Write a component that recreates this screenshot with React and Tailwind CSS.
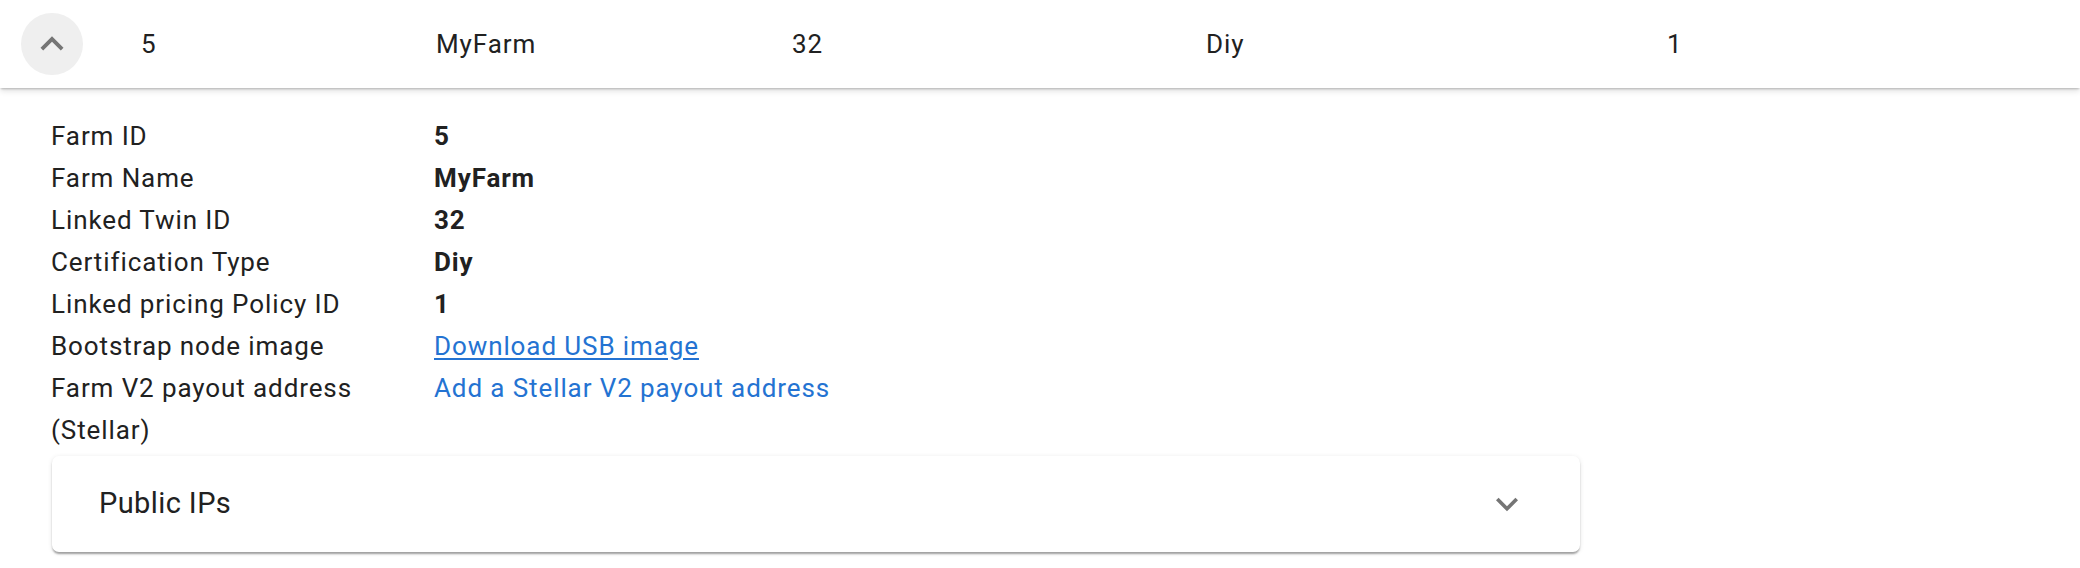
import React from 'react';

const ChevronUp = ({ className = '' }) => (
  <svg viewBox="0 0 24 24" className={className} fill="currentColor">
    <path d="M7.41 15.41 12 10.83l4.59 4.58L18 14l-6-6-6 6z" />
  </svg>
);

const ChevronDown = ({ className = '' }) => (
  <svg viewBox="0 0 24 24" className={className} fill="currentColor">
    <path d="M16.59 8.59 12 13.17 7.41 8.59 6 10l6 6 6-6z" />
  </svg>
);

const details = [
  { label: 'Farm ID', value: '5' },
  { label: 'Farm Name', value: 'MyFarm' },
  { label: 'Linked Twin ID', value: '32' },
  { label: 'Certification Type', value: 'Diy' },
  { label: 'Linked pricing Policy ID', value: '1' },
  { label: 'Bootstrap node image', value: 'Download USB image', link: true, underline: true },
  { label: 'Farm V2 payout address (Stellar)', value: 'Add a Stellar V2 payout address', link: true },
];

const FarmRow = () => {
  return (
    <div
      className="
        relative z-10 h-[88px] bg-white
        grid grid-cols-[141px_295px_356px_414px_461px_1fr] items-center
        text-[26px] tracking-[0.9px] text-[#212121]
        shadow-[0_2px_2px_-1px_rgba(0,0,0,0.22),0_3px_6px_0_rgba(0,0,0,0.12)]
      "
    >
      <div className="pl-[21px]">
        <button
          type="button"
          className="w-[62px] h-[62px] rounded-full bg-[#efefef] flex items-center justify-center text-[#757575]"
        >
          <ChevronUp className="w-[46px] h-[46px]" />
        </button>
      </div>
      <span>5</span>
      <span>MyFarm</span>
      <span>32</span>
      <span>Diy</span>
      <span>1</span>
    </div>
  );
};

const FarmDetails = () => {
  return (
    <div className="h-[480px] bg-white pt-[27px] shadow-[0_0_3px_rgba(0,0,0,0.12)]">
      <div className="pl-[51px] grid grid-cols-[383px_1fr] text-[26px] tracking-[0.9px] leading-[42px] text-[#212121]">
        {details.map((row) => (
          <React.Fragment key={row.label}>
            <div className="pr-[40px]">{row.label}</div>
            <div>
              {row.link ? (
                <a
                  href="#"
                  className={`text-[#2473d2] ${row.underline ? 'underline underline-offset-[3px]' : ''}`}
                >
                  {row.value}
                </a>
              ) : (
                <span className="font-bold">{row.value}</span>
              )}
            </div>
          </React.Fragment>
        ))}
      </div>

      <div
        className="
          ml-[52px] mt-[5px] w-[1528px] h-[96px] bg-white rounded-[7px]
          flex items-center justify-between pl-[47px] pr-[51px]
          shadow-[0_3px_2px_-1px_rgba(0,0,0,0.22),0_2px_2px_0_rgba(0,0,0,0.14),0_1px_5px_0_rgba(0,0,0,0.1)]
        "
      >
        <span className="text-[29px] tracking-[0.4px] text-[#212121]">Public IPs</span>
        <ChevronDown className="w-[44px] h-[44px] text-[#757575]" />
      </div>
    </div>
  );
};

export default function App() {
  return (
    <div className="w-[2080px] h-[568px] overflow-hidden bg-white font-['Roboto',sans-serif]">
      <FarmRow />
      <FarmDetails />
    </div>
  );
}
